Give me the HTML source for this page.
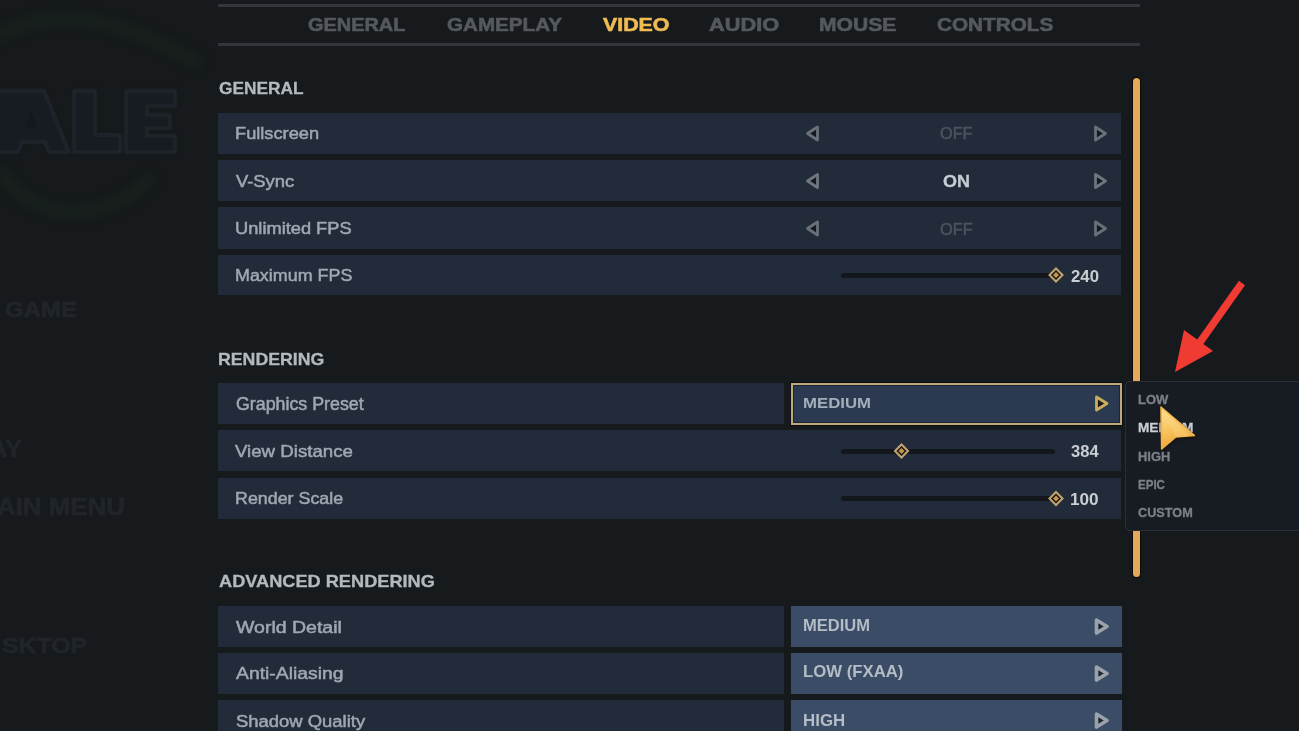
<!DOCTYPE html>
<html><head><meta charset="utf-8">
<style>
html,body{margin:0;padding:0;}
body{width:1299px;height:731px;overflow:hidden;background:#161a1d;position:relative;filter:blur(0.4px);font-family:"Liberation Sans",sans-serif;}
.a{position:absolute;}
.tx{position:absolute;white-space:nowrap;line-height:1;transform-origin:0 0;}
.line{position:absolute;left:218px;width:922px;background:#33373c;border-radius:1px;}
.row{position:absolute;left:218px;width:903px;background:#222b39;}
.lab{position:absolute;left:218px;width:566px;background:#222b39;}
.sel{position:absolute;left:791px;width:331px;background:#3a4c66;}
.track{position:absolute;left:841px;width:214px;height:5px;background:#13171c;border-radius:3px;}
</style></head><body>
<!-- left faint logo -->
<svg class="a" style="left:0;top:0" width="220" height="731">
  <defs><filter id="bl" x="-50%" y="-50%" width="200%" height="200%"><feGaussianBlur stdDeviation="5"/></filter>
  <filter id="bl2"><feGaussianBlur stdDeviation="0.8"/></filter></defs>
  <g filter="url(#bl)" opacity="0.4" fill="none" stroke="#1f2b1b">
    <path d="M-10 40 C20 20 70 12 120 28 C160 40 185 55 200 65" stroke-width="12"/>
    <path d="M0 170 C20 205 60 222 110 205 C130 197 145 185 150 175" stroke-width="12"/>
  </g>
  <g filter="url(#bl2)" fill="#191d23" stroke="#23282d" stroke-width="3">
    <path d="M-5 91 L44 91 L69 152 L49 152 L45 142 L22 142 L18 152 L-5 152 Z"/>
    <path d="M74 91 L95 91 L95 135 L120 135 L120 152 L74 152 Z"/>
    <path d="M126 91 L175 91 L175 106 L147 106 L147 115 L170 115 L170 128 L147 128 L147 136 L175 136 L175 152 L126 152 Z"/>
  </g>
  <path d="M31 111 L37 128 L25 128 Z" fill="#14171b"/>
</svg>

<div class="line" style="top:4.3px;height:2.7px"></div>
<div class="line" style="top:43px;height:3px"></div>

<!-- General rows -->
<div class="row" style="top:113px;height:41px"></div>
<div class="row" style="top:160px;height:41px"></div>
<div class="row" style="top:207px;height:42px"></div>
<div class="row" style="top:255px;height:40px"></div>

<!-- arrows -->
<svg class="a" style="left:0;top:0;pointer-events:none" width="1299" height="731">
  <g fill="#141820" stroke="#687079" stroke-width="2.8" stroke-linejoin="round">
    <path d="M807.5 133.5 L817.5 127 L817.5 140 Z"/>
    <path d="M1095.5 127 L1105.5 133.5 L1095.5 140 Z"/>
    <path d="M807.5 228.5 L817.5 222 L817.5 235 Z"/>
    <path d="M1095.5 222 L1105.5 228.5 L1095.5 235 Z"/>
  </g>
  <g fill="#141820" stroke="#6e7680" stroke-width="2.8" stroke-linejoin="round">
    <path d="M807.5 181 L817.5 174.5 L817.5 187.5 Z"/>
    <path d="M1095.5 174.5 L1105.5 181 L1095.5 187.5 Z"/>
  </g>
</svg>

<!-- sliders -->
<div class="track" style="top:273px"></div>
<div class="track" style="top:448.5px"></div>
<div class="track" style="top:496px"></div>

<!-- rendering rows -->
<div class="lab" style="top:383px;height:41px"></div>
<div class="a" style="left:791px;top:383px;width:327px;height:38px;border:2px solid #bfa87a;background:#2b3a51;box-shadow:0 0 0 1px #0b0d11, inset 0 0 0 1px #1c2536"></div>
<div class="row" style="top:430px;height:41px"></div>
<div class="row" style="top:478px;height:41px"></div>
<div class="track" style="top:448.5px"></div>
<div class="track" style="top:496px"></div>

<!-- advanced rows -->
<div class="lab" style="top:606px;height:41px"></div>
<div class="sel" style="top:606px;height:41px"></div>
<div class="lab" style="top:653px;height:41px"></div>
<div class="sel" style="top:653px;height:41px"></div>
<div class="lab" style="top:700px;height:41px"></div>
<div class="sel" style="top:700px;height:41px"></div>

<svg class="a" style="left:0;top:0" width="1299" height="731">
  <!-- diamonds -->
  <g id="dm">
  </g>
  <g fill="#1b1a17" stroke="#c2a66e" stroke-width="2">
    <path d="M1056 268.5 L1062.5 275 L1056 281.5 L1049.5 275 Z"/>
    <path d="M901.5 444.5 L908 451 L901.5 457.5 L895 451 Z"/>
    <path d="M1056 492 L1062.5 498.5 L1056 505 L1049.5 498.5 Z"/>
  </g>
  <g fill="#c4944c">
    <path d="M1056 272 L1059 275 L1056 278 L1053 275 Z"/>
    <path d="M901.5 448 L904.5 451 L901.5 454 L898.5 451 Z"/>
    <path d="M1056 495.5 L1059 498.5 L1056 501.5 L1053 498.5 Z"/>
  </g>
  <!-- select arrows -->
  <path d="M1096.5 397 L1107 403.5 L1096.5 410 Z" fill="#1a1c1c" stroke="#c9ad5f" stroke-width="2.8" stroke-linejoin="round"/>
  <g fill="#1e2530" stroke="#9aa2ab" stroke-width="3.6" stroke-linejoin="round">
    <path d="M1096.5 620 L1107 626.5 L1096.5 633 Z"/>
    <path d="M1096.5 667 L1107 673.5 L1096.5 680 Z"/>
    <path d="M1096.5 714 L1107 720.5 L1096.5 727 Z"/>
  </g>
</svg>

<!-- scrollbar -->
<div class="a" style="left:1133px;top:78px;width:7px;height:499px;background:#e5aa58;border-radius:3.5px;box-shadow:0 0 0 1px #0c0b0a"></div>

<!-- dropdown -->
<div class="a" style="left:1125px;top:381px;width:180px;height:148px;background:#171c23;border:1.5px solid #2a2f37;border-radius:4px"></div>

<span class="tx" style="left:308.22px;top:16.03px;font-size:18.75px;font-weight:bold;color:#55595e;transform:scaleX(1.0619);-webkit-text-stroke:0.6px #55595e;">GENERAL</span>
<span class="tx" style="left:446.73px;top:16.03px;font-size:18.75px;font-weight:bold;color:#55595e;transform:scaleX(1.0991);-webkit-text-stroke:0.6px #55595e;">GAMEPLAY</span>
<span class="tx" style="left:602.84px;top:16.03px;font-size:18.75px;font-weight:bold;color:#efbb52;transform:scaleX(1.1394);-webkit-text-stroke:0.6px #efbb52;">VIDEO</span>
<span class="tx" style="left:709.45px;top:16.03px;font-size:18.75px;font-weight:bold;color:#55595e;transform:scaleX(1.1616);-webkit-text-stroke:0.6px #55595e;">AUDIO</span>
<span class="tx" style="left:818.51px;top:16.03px;font-size:18.75px;font-weight:bold;color:#55595e;transform:scaleX(1.1260);-webkit-text-stroke:0.6px #55595e;">MOUSE</span>
<span class="tx" style="left:936.63px;top:16.03px;font-size:18.75px;font-weight:bold;color:#55595e;transform:scaleX(1.1054);-webkit-text-stroke:0.6px #55595e;">CONTROLS</span>
<span class="tx" style="left:219.06px;top:81.42px;font-size:16.72px;font-weight:bold;color:#b3b9bd;transform:scaleX(1.0359);-webkit-text-stroke:0.3px #b3b9bd;">GENERAL</span>
<span class="tx" style="left:218.31px;top:350.73px;font-size:17.01px;font-weight:bold;color:#b3b9bd;transform:scaleX(1.0427);-webkit-text-stroke:0.3px #b3b9bd;">RENDERING</span>
<span class="tx" style="left:219.06px;top:573.86px;font-size:16.57px;font-weight:bold;color:#b3b9bd;transform:scaleX(1.0978);-webkit-text-stroke:0.3px #b3b9bd;">ADVANCED RENDERING</span>
<span class="tx" style="left:234.71px;top:125.27px;font-size:17.3px;font-weight:normal;color:#9fa8b2;transform:scaleX(1.0547);-webkit-text-stroke:0.5px #9fa8b2;">Fullscreen</span>
<span class="tx" style="left:235.79px;top:174.30px;font-size:15.99px;font-weight:normal;color:#9fa8b2;transform:scaleX(1.1497);-webkit-text-stroke:0.5px #9fa8b2;">V-Sync</span>
<span class="tx" style="left:234.68px;top:221.18px;font-size:16.72px;font-weight:normal;color:#9fa8b2;transform:scaleX(1.0923);-webkit-text-stroke:0.5px #9fa8b2;">Unlimited FPS</span>
<span class="tx" style="left:234.72px;top:267.03px;font-size:17.3px;font-weight:normal;color:#9fa8b2;transform:scaleX(1.0359);-webkit-text-stroke:0.5px #9fa8b2;">Maximum FPS</span>
<span class="tx" style="left:235.76px;top:396.31px;font-size:17.44px;font-weight:normal;color:#9fa8b2;transform:scaleX(1.0209);-webkit-text-stroke:0.5px #9fa8b2;">Graphics Preset</span>
<span class="tx" style="left:234.67px;top:442.53px;font-size:17.15px;font-weight:normal;color:#9fa8b2;transform:scaleX(1.0881);-webkit-text-stroke:0.5px #9fa8b2;">View Distance</span>
<span class="tx" style="left:234.60px;top:491.44px;font-size:16.72px;font-weight:normal;color:#9fa8b2;transform:scaleX(1.0686);-webkit-text-stroke:0.5px #9fa8b2;">Render Scale</span>
<span class="tx" style="left:235.60px;top:618.73px;font-size:16.13px;font-weight:normal;color:#9fa8b2;transform:scaleX(1.2100);-webkit-text-stroke:0.5px #9fa8b2;">World Detail</span>
<span class="tx" style="left:235.58px;top:665.31px;font-size:17.01px;font-weight:normal;color:#9fa8b2;transform:scaleX(1.1382);-webkit-text-stroke:0.5px #9fa8b2;">Anti-Aliasing</span>
<span class="tx" style="left:235.57px;top:713.92px;font-size:16.86px;font-weight:normal;color:#9fa8b2;transform:scaleX(1.0936);-webkit-text-stroke:0.5px #9fa8b2;">Shadow Quality</span>
<span class="tx" style="left:940.25px;top:126.40px;font-size:15.99px;font-weight:normal;color:#4a5461;transform:scaleX(1.0184);-webkit-text-stroke:0.5px #4a5461;">OFF</span>
<span class="tx" style="left:943.06px;top:174.00px;font-size:16.86px;font-weight:bold;color:#c5ccd3;transform:scaleX(1.0664);-webkit-text-stroke:0.3px #c5ccd3;">ON</span>
<span class="tx" style="left:940.25px;top:220.73px;font-size:16.28px;font-weight:normal;color:#4a5461;transform:scaleX(1.0064);-webkit-text-stroke:0.5px #4a5461;">OFF</span>
<span class="tx" style="left:1071.00px;top:268.04px;font-size:16.13px;font-weight:bold;color:#c9ced3;transform:scaleX(1.0402);">240</span>
<span class="tx" style="left:1071.30px;top:444.27px;font-size:15.99px;font-weight:bold;color:#c9ced3;transform:scaleX(1.0344);">384</span>
<span class="tx" style="left:1070.23px;top:491.77px;font-size:15.99px;font-weight:bold;color:#c9ced3;transform:scaleX(1.0745);">100</span>
<span class="tx" style="left:802.91px;top:394.50px;font-size:15.41px;font-weight:bold;color:#a3aebb;transform:scaleX(1.0884);">MEDIUM</span>
<span class="tx" style="left:802.97px;top:618.27px;font-size:15.99px;font-weight:bold;color:#b4bcc5;transform:scaleX(1.0346);">MEDIUM</span>
<span class="tx" style="left:802.95px;top:664.45px;font-size:15.99px;font-weight:bold;color:#b4bcc5;transform:scaleX(1.0470);">LOW (FXAA)</span>
<span class="tx" style="left:802.94px;top:712.77px;font-size:15.99px;font-weight:bold;color:#b4bcc5;transform:scaleX(1.0568);">HIGH</span>
<span class="tx" style="left:1138.15px;top:394.06px;font-size:12.94px;font-weight:bold;color:#7b8187;transform:scaleX(1.0011);-webkit-text-stroke:0.3px #7b8187;">LOW</span>
<span class="tx" style="left:1138.16px;top:422.04px;font-size:12.94px;font-weight:bold;color:#c9cdd1;transform:scaleX(1.0541);-webkit-text-stroke:0.3px #c9cdd1;">MEDIUM</span>
<span class="tx" style="left:1138.15px;top:449.54px;font-size:13.08px;font-weight:bold;color:#7b8187;transform:scaleX(0.9892);-webkit-text-stroke:0.3px #7b8187;">HIGH</span>
<span class="tx" style="left:1138.13px;top:477.97px;font-size:13.52px;font-weight:bold;color:#7b8187;transform:scaleX(0.8540);-webkit-text-stroke:0.3px #7b8187;">EPIC</span>
<span class="tx" style="left:1138.14px;top:506.49px;font-size:13.52px;font-weight:bold;color:#7b8187;transform:scaleX(0.9390);-webkit-text-stroke:0.3px #7b8187;">CUSTOM</span>
<span class="tx" style="left:5.43px;top:298.94px;font-size:22.09px;font-weight:bold;color:#212529;transform:scaleX(1.0858);-webkit-text-stroke:0.8px #212529;">GAME</span>
<span class="tx" style="left:-10.92px;top:438.27px;font-size:23.55px;font-weight:bold;color:#212529;transform:scaleX(1.0858);-webkit-text-stroke:0.8px #212529;">AY</span>
<span class="tx" style="left:-3.05px;top:495.06px;font-size:23.84px;font-weight:bold;color:#212529;transform:scaleX(1.0858);-webkit-text-stroke:0.8px #212529;">AIN MENU</span>
<span class="tx" style="left:2.46px;top:634.53px;font-size:21.66px;font-weight:bold;color:#212529;transform:scaleX(1.1466);-webkit-text-stroke:0.8px #212529;">SKTOP</span>

<!-- cursor -->
<svg class="a" style="left:0;top:0" width="1299" height="731">
  <defs>
    <linearGradient id="cg" x1="1161" y1="407" x2="1170" y2="449" gradientUnits="userSpaceOnUse">
      <stop offset="0" stop-color="#fde294"/>
      <stop offset="0.5" stop-color="#f8c866"/>
      <stop offset="1" stop-color="#f2a532"/>
    </linearGradient>
    <filter id="cs" x="-30%" y="-30%" width="160%" height="160%"><feGaussianBlur stdDeviation="0.8"/></filter>
  </defs>
  <path d="M1161.5 408 L1195.5 437 L1176.5 438.5 L1162.5 450 Z" fill="#1a0f02" opacity="0.7" filter="url(#cs)" stroke="#1a0f02" stroke-width="1.5" stroke-linejoin="round"/>
  <path d="M1161 407 L1194.5 435.5 L1175.8 437 L1161.7 449 Z" fill="url(#cg)" stroke="#f2b24a" stroke-width="1.6" stroke-linejoin="round"/>
  <path d="M1163 412 L1175.8 437 L1190 436 Z" fill="#fbd888" opacity="0.35"/>
<!-- red arrow -->
  <line x1="1242" y1="283" x2="1198" y2="345" stroke="#ef3b31" stroke-width="7.5" stroke-linecap="butt"/>
  <path d="M1175 372 L1184 330 L1213 351 Z" fill="#ef3b31"/>
</svg>
</body></html>
